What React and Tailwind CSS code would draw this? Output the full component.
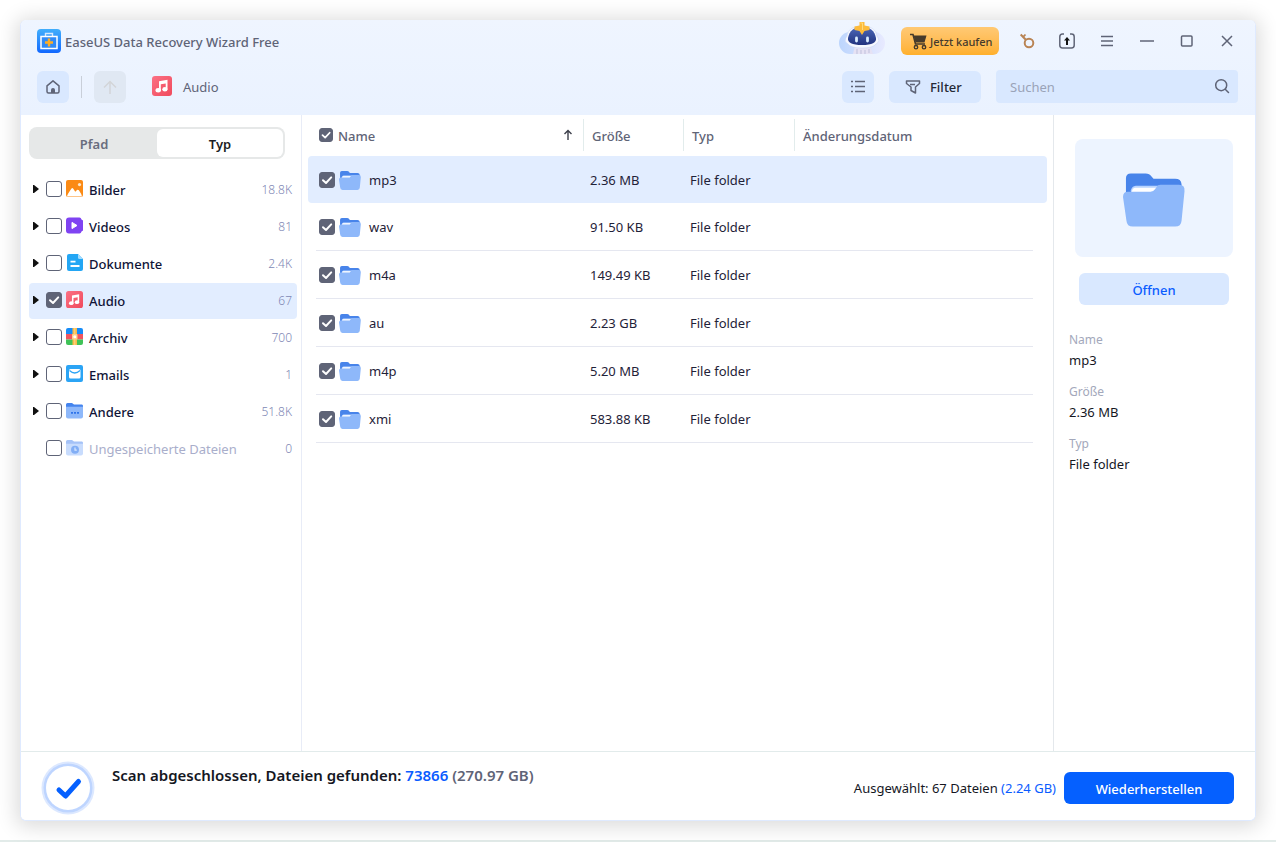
import React, { useState } from "react";

const categories = [
  { id: "bilder", label: "Bilder", count: "18.8K" },
  { id: "videos", label: "Videos", count: "81" },
  { id: "dokumente", label: "Dokumente", count: "2.4K" },
  { id: "audio", label: "Audio", count: "67" },
  { id: "archiv", label: "Archiv", count: "700" },
  { id: "emails", label: "Emails", count: "1" },
  { id: "andere", label: "Andere", count: "51.8K" },
  { id: "ungespeichert", label: "Ungespeicherte Dateien", count: "0", disabled: true },
];

const files = [
  { name: "mp3", size: "2.36 MB" },
  { name: "wav", size: "91.50 KB" },
  { name: "m4a", size: "149.49 KB" },
  { name: "au", size: "2.23 GB" },
  { name: "m4p", size: "5.20 MB" },
  { name: "xmi", size: "583.88 KB" },
];

const CheckBox = ({ id, label, defaultChecked, small }) => (
  <span className={`relative inline-flex shrink-0 ${small ? "w-[14px] h-[14px]" : "w-4 h-4"}`}>
    <input
      id={id}
      type="checkbox"
      aria-label={label}
      defaultChecked={defaultChecked}
      className="peer appearance-none w-full h-full rounded-[3px] border border-[#5f6477] bg-white checked:bg-[#5f6477]"
    />
    <svg viewBox="0 0 16 16" className="absolute inset-0 w-full h-full pointer-events-none hidden peer-checked:block">
      <path d="M4 8.2 L7 11 L12.2 5.4" fill="none" stroke="#fff" strokeWidth="2" strokeLinecap="round" strokeLinejoin="round" />
    </svg>
  </span>
);

const AudioIcon = ({ className }) => (
  <svg viewBox="0 0 20 20" className={className}>
    <defs>
      <linearGradient id="audioBg" x1="0" y1="0" x2="1" y2="1">
        <stop offset="0" stopColor="#fb7185" />
        <stop offset="1" stopColor="#f04a5c" />
      </linearGradient>
    </defs>
    <rect width="20" height="20" rx="3" fill="url(#audioBg)" />
    <path d="M7 5.2 L15.500 3.8 V13.2 H13.700 V7.4 L8.800 8.3 V14.6 H7 Z" fill="#fff" />
    <ellipse cx="6.2" cy="14.3" rx="2.7" ry="2.2" fill="#fff" />
    <ellipse cx="12.9" cy="13.2" rx="2.6" ry="2.2" fill="#fff" />
  </svg>
);

const FolderIcon = ({ className }) => (
  <svg viewBox="0 0 63 54" className={className}>
    <path d="M3 26 V5 Q3 0 8 0 H23 Q27 0 29 3 L31 5.5 H53 Q59 5.5 59.5 11 V26 Z" fill="#4884ea" />
    <path d="M8 24 V17 Q9 13 13 12.500 H40 V24 Z" fill="#b8d4ff" />
    <path d="M9 24 V18 Q9.500 15 12 14.500 H36 V24 Z" fill="#fff" />
    <path d="M5 18.500 H28 Q31 18.500 32.500 16 L34 14 Q35.500 11.500 38 11.500 H57 Q63 11.500 62.500 18 L59.500 48 Q59 54 53 54 H10 Q4 54 3.500 48 L0 24 Q0 18.500 5 18.500 Z" fill="#8eb8fa" />
  </svg>
);

const CategoryIcon = ({ id }) => {
  const cls = "w-[18px] h-[18px] mb-[2px] shrink-0";
  switch (id) {
    case "bilder":
      return (
        <svg viewBox="0 0 18 18" className={cls}>
          <rect width="17" height="17" rx="2" fill="#fb8a14" />
          <circle cx="13.5" cy="4.6" r="1.6" fill="#ffe7c7" />
          <path d="M1 16.500 Q1.200 14.500 5.500 8.500 Q6.300 7.500 7.100 8.500 L9.300 11.800 L11 10 Q12 9.200 12.900 10.300 Q15.500 13.800 16 16.500 Z" fill="#fff" />
        </svg>
      );
    case "videos":
      return (
        <svg viewBox="0 0 18 18" className={cls}>
          <path d="M3 0.500 H13.500 Q15 0.500 15.500 2.500 L17 3.500 V13.500 L15.500 14.500 Q15 16.500 13.500 16.500 H3 Q0 16.500 0 13.500 V3.500 Q0 0.500 3 0.500 Z" fill="#7f43f2" />
          <path d="M6 5.400 V11.600 L11 8.500 Z" fill="#fff" stroke="#fff" strokeLinejoin="round" />
        </svg>
      );
    case "dokumente":
      return (
        <svg viewBox="0 0 18 18" className={cls}>
          <path d="M3 0 H12 L17 5 V15 Q17 17 15 17 H3 Q1 17 1 15 V2 Q1 0 3 0 Z" fill="#23a6f4" />
          <path d="M12 0 L17 5 H13.500 Q12 5 12 3.500 Z" fill="#a3dcff" />
          <path d="M4.500 7.700 H9.500 M4.500 12 H13.500" stroke="#fff" strokeWidth="1.800" />
        </svg>
      );
    case "audio":
      return <AudioIcon className="w-[17px] h-[17px] mb-[3px] mr-px shrink-0" />;
    case "archiv":
      return (
        <svg viewBox="0 0 18 18" className={cls}>
          <path d="M0 6 V2 Q0 0 2 0 H15 Q17 0 17 2 V6 Z" fill="#168cf8" />
          <rect y="6" width="17" height="5.500" fill="#f0545f" />
          <path d="M0 11.500 H17 V15 Q17 17 15 17 H2 Q0 17 0 15 Z" fill="#3fc257" />
          <rect x="6.500" width="4.500" height="17" fill="#f9bb4c" />
          <path d="M8.800 0 V17" stroke="#ffe09c" strokeWidth="0.800" />
          <rect x="6" y="6" width="5.500" height="5.500" rx="1" fill="#ffd487" />
          <circle cx="8.800" cy="8.700" r="1.500" fill="#fff" />
        </svg>
      );
    case "emails":
      return (
        <svg viewBox="0 0 18 18" className={cls}>
          <rect width="17" height="17" rx="2" fill="#2ba4f5" />
          <rect x="3" y="4" width="11.500" height="9.500" rx="1.500" fill="#fff" />
          <path d="M3.500 5.500 Q8.700 10.500 14 5.500" fill="none" stroke="#2ba4f5" strokeWidth="1.200" />
        </svg>
      );
    case "andere":
      return (
        <svg viewBox="0 0 18 18" className={cls}>
          <path d="M0 6 V2.500 Q0 1 1.500 1 H6 L8 2.500 H16 Q17 2.500 17 4 V6 Z" fill="#4484ee" />
          <path d="M0 4.800 H17 V14.500 Q17 16.500 15 16.500 H2 Q0 16.500 0 14.500 Z" fill="#8eb8fa" />
          <path d="M5 10.800 H7 M8 10.800 H10 M11 10.800 H13" stroke="#2f74ea" strokeWidth="1.800" />
        </svg>
      );
    default:
      return (
        <svg viewBox="0 0 18 18" className={cls}>
          <path d="M0 6 V2.500 Q0 1 1.500 1 H6 L8 2.500 H16 Q17 2.500 17 4 V6 Z" fill="#a4c2f7" />
          <path d="M0 4.800 H17 V14.500 Q17 16.500 15 16.500 H2 Q0 16.500 0 14.500 Z" fill="#c8dcfd" />
          <circle cx="9" cy="10.700" r="4" fill="#82aef5" />
          <path d="M9 8.500 V11.200 H10.800" fill="none" stroke="#d8e6fe" strokeWidth="1.200" />
        </svg>
      );
  }
};

const AppLogo = () => (
  <svg viewBox="0 0 24 24" className="w-6 h-6 shrink-0">
    <defs>
      <linearGradient id="logoBg" x1="0" y1="0" x2="0" y2="1">
        <stop offset="0" stopColor="#41aefc" />
        <stop offset="1" stopColor="#1268ff" />
      </linearGradient>
    </defs>
    <rect width="24" height="24" rx="4" fill="url(#logoBg)" />
    <path d="M8.500 7 V4.500 H15.500 V7" fill="none" stroke="#d5e9ff" strokeWidth="1.400" />
    <rect x="4" y="7.500" width="16" height="12" fill="#2f8af8" stroke="#fff" strokeWidth="1.500" />
    <path d="M12 9.500 V17.500 M8 13.500 H16" stroke="#ffad25" strokeWidth="2.400" />
  </svg>
);

const Robot = () => (
  <svg viewBox="0 0 46 34" className="w-[46px] h-[34px]">
    <defs>
      <linearGradient id="cloud" x1="0" y1="0" x2="1" y2="0">
        <stop offset="0" stopColor="#bcd5fd" />
        <stop offset="1" stopColor="#e8eaff" />
      </linearGradient>
      <linearGradient id="visor" x1="0" y1="0" x2="0" y2="1">
        <stop offset="0" stopColor="#4c68b8" />
        <stop offset="1" stopColor="#22337f" />
      </linearGradient>
    </defs>
    <rect y="11" width="46" height="22" rx="11" fill="url(#cloud)" />
    <path d="M14 33 L16 25 H31 L34 33 Z" fill="#e6e2f4" />
    <path d="M18 28 V33 M22 29 V33 M26 29 V33 M30 28 V32" stroke="#bfc1dc" strokeWidth="1" />
    <path d="M8 15 Q9 5 23 5 Q37 5 38 15 Q42 20 37 23 Q34 27 23 27 Q12 27 9 23 Q4 20 8 15 Z" fill="#f6f8ff" stroke="#c5d2f0" strokeWidth="0.500" />
    <path d="M9 17 Q11 6 23 6 Q35 6 37 17 Q38 24 23 24 Q8 24 9 17 Z" fill="url(#visor)" />
    <path d="M17.500 17 V20 M28.500 17 V20" stroke="#d9ecff" strokeWidth="2.800" strokeLinecap="round" />
    <path d="M20.500 1 H25.500 V4.500 L30.500 5.500 V9 L25.500 10 L23 14 L20.500 10 L15.500 9 V5.500 L20.500 4.500 Z" fill="#fdbb3b" />
    <path d="M21.500 2 H23.500 V9" fill="none" stroke="#ffda7b" strokeWidth="1" />
  </svg>
);

const TitleButton = ({ label, children }) => (
  <button aria-label={label} className="w-10 h-8 flex items-center justify-center">
    <svg viewBox="0 0 20 20" className="w-5 h-5" fill="none" stroke="#5f6477" strokeWidth="1.500">
      {children}
    </svg>
  </button>
);

const Header = () => (
  <header className="bg-gradient-to-b from-[#eff5ff] to-[#eaf2ff]">
    {/* Title bar */}
    <div className="flex items-center h-[42px] pl-4 pr-2">
      <AppLogo />
      <h1 className="ml-1 pt-[3px] text-[13px] font-medium text-[#5f6477]">EaseUS Data Recovery Wizard Free</h1>
      <div className="ml-auto flex items-center">
        <button aria-label="Assistent" className="mr-4 pb-[6px]">
          <Robot />
        </button>
        <button className="w-[98px] h-7 mr-2 pl-[9px] flex items-center gap-[3px] rounded-md bg-gradient-to-b from-[#ffc974] to-[#ffb02b] text-[11px] font-medium text-[#463a2b] whitespace-nowrap">
          <svg viewBox="0 0 17 17" className="w-[17px] h-[17px] shrink-0">
            <path d="M0 1.500 H3 L5.500 11 H15" fill="none" stroke="#463a2b" strokeWidth="1.600" />
            <path d="M3.500 2.500 H16.500 L14.500 9.500 H5.500 Z" fill="#463a2b" />
            <circle cx="6" cy="14.200" r="1.700" fill="none" stroke="#463a2b" strokeWidth="1.400" />
            <circle cx="14" cy="14.200" r="1.700" fill="none" stroke="#463a2b" strokeWidth="1.400" />
          </svg>
          <span className="pt-[2px]">Jetzt kaufen</span>
        </button>
        <TitleButton label="Lizenz">
          <g stroke="#b98455">
            <circle cx="12" cy="12" r="4.300" strokeWidth="2" />
            <path d="M8.800 8.800 L3.700 3.500" strokeWidth="2" />
            <path d="M8.500 3.500 L6 6.200" strokeWidth="1.800" />
          </g>
        </TitleButton>
        <TitleButton label="Exportieren">
          <path d="M7 3 H5.500 Q2.800 3 2.800 5.700 V14.300 Q2.800 17 5.500 17 H14.500 Q17.200 17 17.200 14.300 V5.700 Q17.200 3 14.500 3 H13" />
          <path d="M10 14 V8" stroke="#111" strokeWidth="2" />
          <path d="M7 9.500 L10 6 L13 9.500 Z" fill="#111" stroke="none" />
        </TitleButton>
        <TitleButton label="Menü">
          <path d="M4 5.500 H16 M4 10 H16 M4 14.500 H16" />
        </TitleButton>
        <TitleButton label="Minimieren">
          <path d="M3 10 H17" />
        </TitleButton>
        <TitleButton label="Maximieren">
          <rect x="4.500" y="5" width="10.500" height="10" rx="1" />
        </TitleButton>
        <TitleButton label="Schließen">
          <path d="M5 5 L15 15 M15 5 L5 15" />
        </TitleButton>
      </div>
    </div>

    {/* Toolbar */}
    <div className="flex items-center pt-2 pb-3 pl-4 pr-[17px]">
      <button aria-label="Startseite" className="w-8 h-8 flex items-center justify-center rounded-md bg-[#d9e8ff]">
        <svg viewBox="0 0 16 16" className="w-4 h-4">
          <path d="M2 6.800 L8 1.800 L14 6.800 V12.500 Q14 14 12.500 14 H3.500 Q2 14 2 12.500 Z" fill="none" stroke="#5f6477" strokeWidth="1.500" strokeLinejoin="round" />
          <path d="M6 14 V11 Q6 9 8 9 Q10 9 10 11 V14 Z" fill="#5f6477" />
        </svg>
      </button>
      <span className="w-px h-[22px] mx-3 bg-[#c9cfd9]" />
      <button aria-label="Nach oben" disabled className="w-8 h-8 flex items-center justify-center rounded-md bg-[#e0e8f3]">
        <svg viewBox="0 0 16 16" className="w-4 h-4" fill="none" stroke="#d3d5d8" strokeWidth="1.500">
          <path d="M8 15 V2.500 M2 8.500 L8 2.500 L14 8.500" />
        </svg>
      </button>
      <AudioIcon className="w-5 h-5 ml-[26px] mb-px" />
      <span className="ml-[11px] pt-[2px] text-[13px] text-[#5f6477]">Audio</span>

      <button aria-label="Listenansicht" className="ml-auto w-8 h-8 flex items-center justify-center rounded-md bg-[#d9e8ff]">
        <svg viewBox="0 0 16 16" className="w-4 h-4" fill="none" stroke="#5f6477" strokeWidth="1.500">
          <path d="M5 2.500 H15 M5 7.500 H15 M5 12.500 H15 M1 2.500 H3 M1 7.500 H3 M1 12.500 H3" />
        </svg>
      </button>
      <button className="w-[92px] h-8 ml-[15px] pl-4 flex items-center gap-[9px] rounded-md bg-[#d9e8ff] text-[13px] font-medium text-[#252936]">
        <svg viewBox="0 0 16 16" className="w-4 h-4" fill="none" stroke="#5f6477" strokeWidth="1.500" strokeLinejoin="round">
          <path d="M1.500 2 H14.500 V4.500 L10.500 8 V14 L6 11.500 V8 L1.500 4.500 Z" />
          <path d="M5 5.500 H10" />
        </svg>
        <span className="pt-[2px]">Filter</span>
      </button>
      <div className="relative ml-[15px]">
        <input
          type="search"
          aria-label="Suchen"
          placeholder="Suchen"
          className="w-[242px] h-[33px] pl-[14px] pr-9 rounded bg-[#d9e8ff] text-[13px] text-[#252936] placeholder:text-[#9aa3b8] outline-none"
        />
        <svg viewBox="0 0 16 16" className="absolute right-2 top-2 w-4 h-4" fill="none" stroke="#5f6477" strokeWidth="1.500" strokeLinecap="round">
          <circle cx="7.200" cy="7.200" r="5.500" />
          <path d="M11.500 11.500 L14.500 14.500" />
        </svg>
      </div>
    </div>
  </header>
);

const Sidebar = ({ tab, setTab, active, setActive }) => (
  <aside className="w-[281px] shrink-0 border-r border-[#e8ecf7] pl-2 pr-1 pt-3">
    <div className="flex w-64 h-8 p-[2px] rounded-lg bg-[#e6e8e8] text-[13px] font-semibold">
      {["Pfad", "Typ"].map((t) => (
        <button
          key={t}
          onClick={() => setTab(t)}
          className={`flex-1 pt-[3px] rounded-md ${tab === t ? "bg-white text-[#1b1d24]" : "text-[#696d7e]"}`}
        >
          {t}
        </button>
      ))}
    </div>

    <ul className="mt-[13px] space-y-px">
      {categories.map((c) => (
        <li
          key={c.id}
          onClick={() => setActive(c.id)}
          className={`flex items-center h-9 pl-1 pr-[5px] rounded ${active === c.id ? "bg-[#e2edff]" : ""}`}
        >
          <svg viewBox="0 0 6 8" className={`w-[6px] h-2 mr-[7px] mb-[2px] ${c.disabled ? "invisible" : ""}`}>
            <path d="M0 0 H1 L6 4 L1 8 H0 Z" fill="#111" />
          </svg>
          <span className="flex mb-[2px] mr-1">
            <CheckBox id={`cat-${c.id}`} defaultChecked={c.id === "audio"} />
          </span>
          <CategoryIcon id={c.id} />
          <label
            htmlFor={`cat-${c.id}`}
            className={`ml-[5px] pt-[2px] text-[13px] whitespace-nowrap ${c.disabled ? "text-[#a9aecb]" : "font-medium text-[#101437]"}`}
          >
            {c.label}
          </label>
          <span className="ml-auto text-xs font-light text-[#8088b5]">{c.count}</span>
        </li>
      ))}
    </ul>
  </aside>
);

const FileTable = ({ selected, setSelected }) => (
  <main className="flex-1 min-w-0 pl-[6px] pr-[6px]">
    <table className="w-full table-fixed border-separate border-spacing-0 text-left">
      <thead>
        <tr className="text-[13px] text-[#5f6477]">
          <th className="w-[276px] p-0 font-medium">
            <div className="flex items-center h-8 mt-1 mb-[5px] pl-[11px] pr-[10px] border-r border-[#e2ecec]">
              <CheckBox small label="Alle auswählen" defaultChecked />
              <span className="ml-[5px] pt-[3px]">Name</span>
              <svg viewBox="0 0 10 12" className="w-[10px] h-3 ml-auto" fill="none" stroke="#3c3f4a" strokeWidth="1.400">
                <path d="M5 11 V1.500 M1.500 5 L5 1.500 L8.500 5" />
              </svg>
            </div>
          </th>
          <th className="w-[100px] p-0 font-medium">
            <div className="flex items-center h-8 mt-1 mb-[5px] pl-2 pt-[3px] border-r border-[#e2ecec]">Größe</div>
          </th>
          <th className="w-[111px] p-0 font-medium">
            <div className="flex items-center h-8 mt-1 mb-[5px] pl-2 pt-[3px] border-r border-[#e2ecec]">Typ</div>
          </th>
          <th className="p-0 font-medium">
            <div className="flex items-center h-8 mt-1 mb-[5px] pl-2 pt-[3px]">Änderungsdatum</div>
          </th>
        </tr>
      </thead>
      <tbody>
        {files.map((f) => {
          const on = f.name === selected;
          const bg = on ? "bg-[#e2edff]" : "";
          const line = on ? "h-[47px]" : "h-12 border-b border-[#e5e7f0]";
          return (
            <tr key={f.name} onClick={() => setSelected(f.name)} className="text-[13px] text-[#1f2238]">
              <td className={`p-0 pl-2 rounded-l ${bg}`}>
                <div className={`flex items-center pl-[3px] ${line}`}>
                  <CheckBox id={`file-${f.name}`} defaultChecked />
                  <FolderIcon className="w-[22px] h-[19px] ml-1 mt-[2px]" />
                  <label htmlFor={`file-${f.name}`} className="ml-2 pt-[3px]">{f.name}</label>
                </div>
              </td>
              <td className={`p-0 ${bg}`}>
                <div className={`flex items-center pl-[6px] pt-[3px] ${line}`}>{f.size}</div>
              </td>
              <td className={`p-0 ${bg}`}>
                <div className={`flex items-center pl-[6px] pt-[3px] ${line}`}>File folder</div>
              </td>
              <td className={`p-0 pr-[14px] rounded-r ${bg}`}>
                <div className={line} />
              </td>
            </tr>
          );
        })}
      </tbody>
    </table>
  </main>
);

const Details = ({ file }) => (
  <aside className="w-[202px] shrink-0 border-l border-[#e4e8ec] pt-6">
    <div className="w-[158px] h-[118px] ml-[21px] pt-[3px] flex items-center justify-center rounded-lg bg-[#edf4ff]">
      <FolderIcon className="w-[62px] h-[54px]" />
    </div>
    <button className="block w-[150px] h-8 ml-[25px] mt-4 pt-[3px] rounded-md bg-[#d9e8ff] text-[13px] font-medium text-[#0a5cff]">
      Öffnen
    </button>
    <dl className="mt-[25px] pl-[15px] text-[13px] leading-5 text-[#15171f]">
      <dt className="text-xs leading-5 text-[#a3a8bb]">Name</dt>
      <dd className="mb-3">{file.name}</dd>
      <dt className="text-xs leading-5 text-[#a3a8bb]">Größe</dt>
      <dd className="mb-3">{file.size}</dd>
      <dt className="text-xs leading-5 text-[#a3a8bb]">Typ</dt>
      <dd>File folder</dd>
    </dl>
  </aside>
);

const Footer = () => (
  <footer className="flex items-center h-[69px] shrink-0 pl-5 pr-[21px] border-t border-[#e2ebeb] bg-white">
    <svg viewBox="0 0 54 54" className="w-[54px] h-[54px] mt-1 shrink-0">
      <circle cx="27" cy="27" r="26.500" fill="#dce8ff" />
      <circle cx="27" cy="27" r="24.500" fill="#bed5ff" />
      <circle cx="27" cy="27" r="22" fill="#fff" />
      <path d="M18 29 L24.500 35 L37.500 20.500" fill="none" stroke="#0560ff" strokeWidth="5" strokeLinecap="round" strokeLinejoin="round" />
    </svg>
    <p className="ml-[17px] mb-[22px] text-[15px] font-semibold text-[#15171f] whitespace-nowrap">
      Scan abgeschlossen, Dateien gefunden: <span className="text-[#0a5cff]">73866</span>{" "}
      <span className="text-[#5f6477]">(270.97 GB)</span>
    </p>
    <p className="ml-auto mt-[6px] text-[13px] text-[#15171f] whitespace-nowrap">
      Ausgewählt: 67 Dateien <span className="text-[#0a5cff]">(2.24 GB)</span>
    </p>
    <button className="w-[170px] h-8 ml-2 mt-1 pt-[3px] rounded-md bg-[#0560ff] text-[13px] font-medium text-white">
      Wiederherstellen
    </button>
  </footer>
);

const App = () => {
  const [tab, setTab] = useState("Typ");
  const [active, setActive] = useState("audio");
  const [selected, setSelected] = useState("mp3");
  const file = files.find((f) => f.name === selected);

  return (
    <div className="min-h-screen flex flex-col p-5 pb-[19px] bg-white border-b-2 border-[#e2ebe9] font-['Noto_Sans',sans-serif]">
      <div className="flex-1 flex flex-col rounded-md overflow-hidden border border-t-0 border-[#dfeaff] bg-white shadow-[0_2px_20px_4px_rgba(0,0,0,0.14)]">
        <Header />
        <div className="flex-1 flex">
          <Sidebar tab={tab} setTab={setTab} active={active} setActive={setActive} />
          <FileTable selected={selected} setSelected={setSelected} />
          <Details file={file} />
        </div>
        <Footer />
      </div>
    </div>
  );
};

export default App;
